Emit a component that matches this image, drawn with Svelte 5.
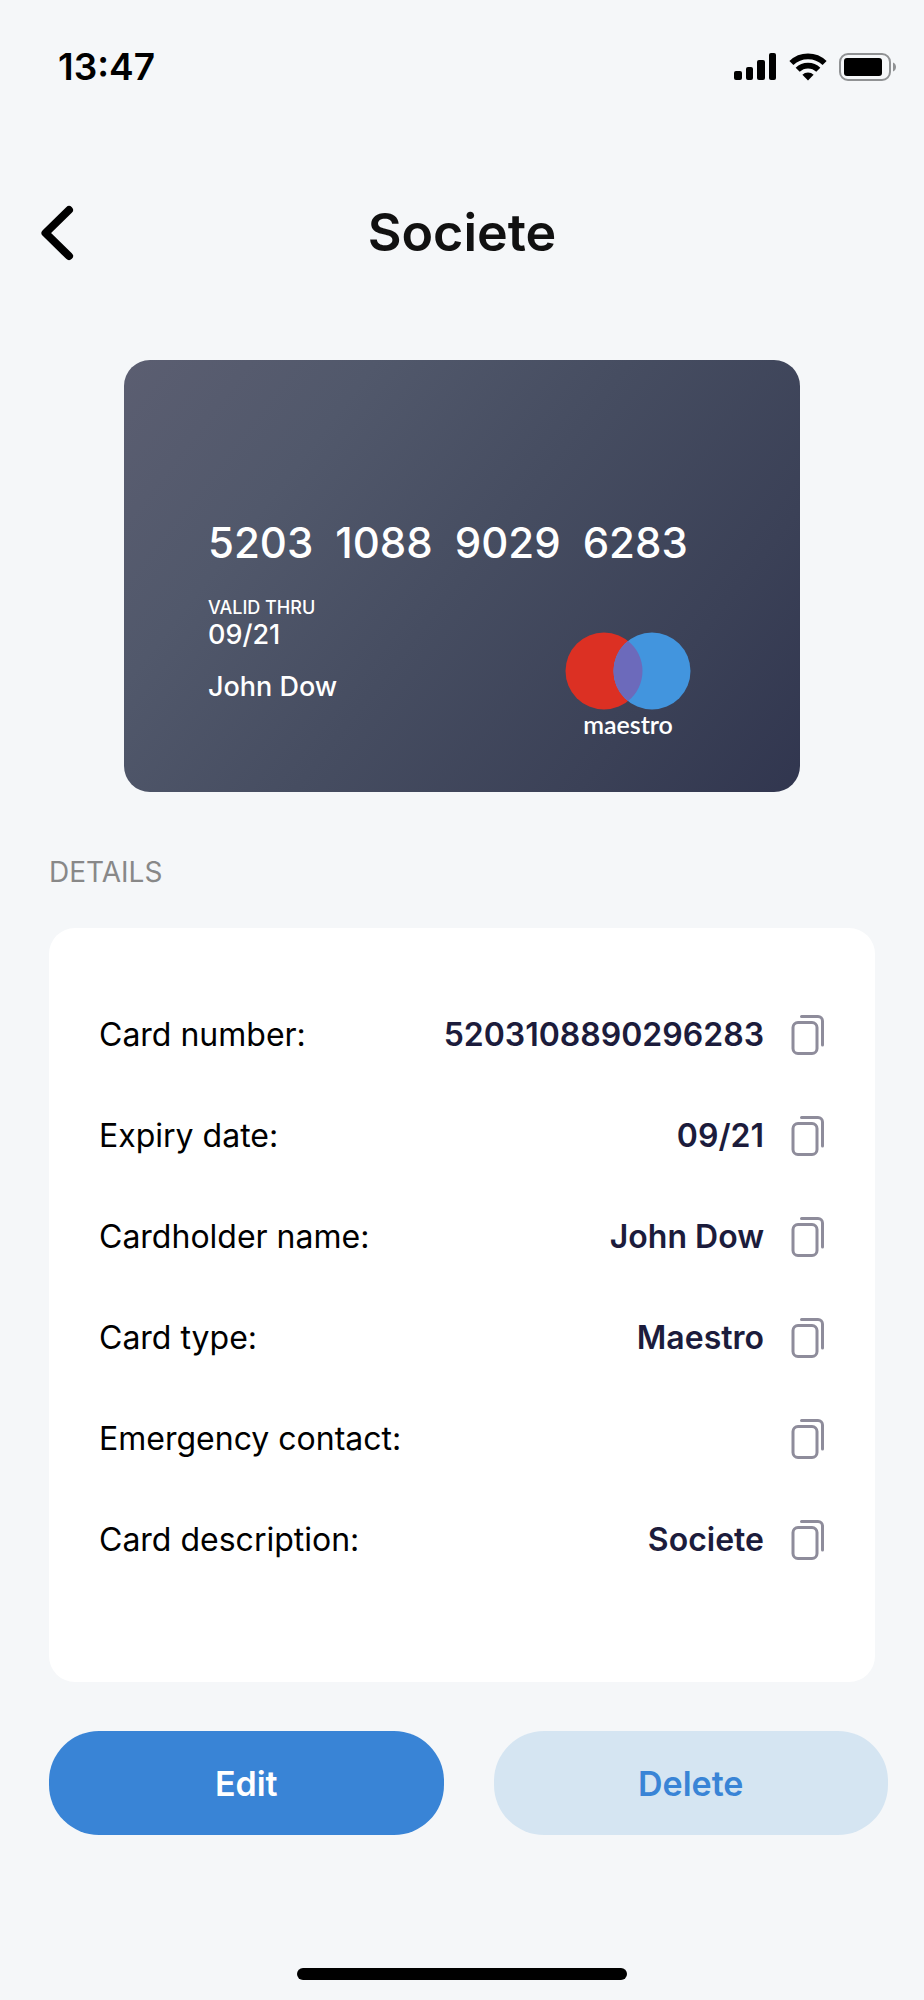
<script>
    // card data
    let card = {
        title: "Societe",
        number: "5203108890296283",
        expiry: "09/21",
        holder: "John Dow",
        type: "Maestro",
        emergency: "",
    };

    $: numberGroups = card.number.match(/.{1,4}/g);

    $: details = [
        { label: "Card number:", value: card.number },
        { label: "Expiry date:", value: card.expiry },
        { label: "Cardholder name:", value: card.holder },
        { label: "Card type:", value: card.type },
        { label: "Emergency contact:", value: card.emergency },
        { label: "Card description:", value: card.title },
    ];

    function goBack() {
        window.history.back();
    }

    function copyValue(value) {
        if (navigator.clipboard) {
            navigator.clipboard.writeText(value);
        }
    }
</script>

<div class="screen">
    <div class="status-bar">
        <span class="time">13:47</span>
        <div class="status-icons">
            <svg width="43" height="28" viewBox="0 0 43 28">
                <rect x="0" y="18" width="8" height="9" rx="2" />
                <rect x="12" y="14" width="7" height="13" rx="2" />
                <rect x="23" y="7" width="8" height="20" rx="2" />
                <rect x="35" y="0" width="7" height="27" rx="2" />
            </svg>
            <svg width="38" height="28" viewBox="0 0 38 28">
                <g fill="none" stroke="#000" stroke-width="5.8">
                    <path d="M2.4 10a24 24 0 0 1 33.2 0" />
                    <path d="M8.7 16.800a14.6 14.6 0 0 1 20.6 0" />
                </g>
                <path d="M19 27.4l-5.600-5.600a8 8 0 0 1 11.200 0z" />
            </svg>
            <svg width="58" height="28" viewBox="0 0 58 28">
                <rect
                    x="1"
                    y="1"
                    width="50"
                    height="26"
                    rx="8"
                    fill="none"
                    stroke="#909294"
                    stroke-width="2"
                />
                <rect x="5" y="5" width="38" height="18" rx="3" />
                <path d="M54 9.5c4 1.6 4 7.4 0 9z" fill="#909294" />
            </svg>
        </div>
    </div>

    <header class="header">
        <button class="back-btn" aria-label="Back" on:click={goBack}>
            <svg width="34" height="56" viewBox="0 0 34 56">
                <path
                    d="M29 5L5.5 28L29 51"
                    fill="none"
                    stroke="#000"
                    stroke-width="8"
                    stroke-linecap="round"
                    stroke-linejoin="round"
                />
            </svg>
        </button>
        <h1>{card.title}</h1>
    </header>

    <!-- Card preview -->
    <section class="bank-card">
        <div class="card-number">
            {#each numberGroups as group}
                <span>{group}</span>
            {/each}
        </div>
        <div class="card-bottom">
            <div class="card-info">
                <span class="valid">VALID THRU</span>
                <span>{card.expiry}</span>
                <span class="holder">{card.holder}</span>
            </div>
            <div class="brand">
                <svg width="126" height="78" viewBox="0 0 126 78">
                    <circle cx="39" cy="39" r="38.5" fill="#dc3023" />
                    <circle cx="87" cy="39" r="38.5" fill="#4295de" />
                    <path
                        d="M63 8.9a38.5 38.5 0 0 1 0 60.2a38.5 38.5 0 0 1 0-60.2z"
                        fill="#6c6abb"
                    />
                </svg>
                <span>maestro</span>
            </div>
        </div>
    </section>

    <h2>DETAILS</h2>

    <dl class="details">
        {#each details as item}
            <div class="row">
                <dt>{item.label}</dt>
                <dd>
                    <span>{item.value}</span>
                    <button
                        class="copy-btn"
                        aria-label="Copy {item.label}"
                        on:click={() => copyValue(item.value)}
                    >
                        <svg width="34" height="42" viewBox="0 0 34 42">
                            <g
                                fill="none"
                                stroke="#8e8c9b"
                                stroke-width="3"
                                stroke-linecap="round"
                            >
                                <rect x="2" y="8.5" width="24" height="31" rx="5" />
                                <path d="M10.5 2.5H27a4.5 4.5 0 0 1 4.5 4.5V31" />
                            </g>
                        </svg>
                    </button>
                </dd>
            </div>
        {/each}
    </dl>

    <div class="actions">
        <button class="edit-btn">Edit</button>
        <button class="delete-btn">Delete</button>
    </div>

    <div class="home-indicator"></div>
</div>

<style>
    :global(body) {
        background: #f5f7f9;
    }

    .screen {
        display: flex;
        flex-direction: column;
        min-height: 100vh;
        box-sizing: border-box;
        padding-bottom: 20px;
        font-family: Inter, "Liberation Sans", sans-serif;
        color: #000;
    }

    button {
        border: none;
        padding: 0;
        background: none;
        font-family: inherit;
        cursor: pointer;
    }

    svg {
        display: block;
    }

    .status-bar {
        display: flex;
        align-items: center;
        justify-content: space-between;
        padding: 45px 27px 45px 58px;
    }

    .time {
        font-size: 37px;
        line-height: 44px;
        font-weight: 600;
    }

    .status-icons {
        display: flex;
        align-items: center;
        gap: 12px;
    }

    .header {
        display: grid;
        grid-template-columns: 1fr auto 1fr;
        align-items: center;
        padding: 69px 40px 0;
    }

    h1 {
        margin: 0;
        font-size: 52px;
        line-height: 60px;
        font-weight: 600;
        color: #111;
    }

    .back-btn {
        justify-self: start;
    }

    .bank-card {
        align-self: center;
        box-sizing: border-box;
        width: calc(100% - 248px);
        margin-top: 97px;
        padding: 158px 109px 54px 84px;
        border-radius: 26px;
        background: linear-gradient(
            128deg,
            #5b5e71 0%,
            #51586b 25%,
            #464d61 50%,
            #3b4157 78%,
            #31364f 100%
        );
        color: #fff;
    }

    .card-number {
        display: flex;
        gap: 22px;
        font-size: 42px;
        line-height: 50px;
        font-weight: 500;
    }

    .card-bottom {
        display: flex;
        justify-content: space-between;
        margin-top: 28px;
    }

    .card-info {
        display: flex;
        flex-direction: column;
        font-size: 27px;
        line-height: 30px;
        font-weight: 500;
    }

    .valid {
        font-size: 18px;
        line-height: 24px;
    }

    .holder {
        margin-top: 22px;
    }

    .brand {
        display: flex;
        flex-direction: column;
        align-items: center;
        margin-top: 36px;
        font-family: Lato, sans-serif;
        font-size: 25px;
        line-height: 28px;
        font-weight: 600;
    }

    h2 {
        margin: 62px 49px 38px;
        font-size: 28px;
        line-height: 36px;
        font-weight: 400;
        color: #888;
    }

    .details {
        margin: 0 49px;
        padding: 56px 50px 92px;
        border-radius: 26px;
        background: #fff;
        font-size: 32px;
        line-height: 40px;
    }

    .row {
        display: flex;
        align-items: center;
        justify-content: space-between;
        height: 101px;
    }

    dd {
        display: flex;
        align-items: center;
        gap: 27px;
        margin: 0;
        font-weight: 600;
        color: #1c1c3c;
    }

    .actions {
        display: grid;
        grid-template-columns: 1fr 1fr;
        gap: 50px;
        margin: 49px 36px 0 49px;
    }

    .edit-btn,
    .delete-btn {
        height: 104px;
        border-radius: 50px;
        font-size: 34px;
        font-weight: 600;
    }

    .edit-btn {
        background: #3984d6;
        color: #fff;
    }

    .delete-btn {
        background: #d5e5f2;
        color: #3984d6;
    }

    .home-indicator {
        align-self: center;
        width: 330px;
        height: 12px;
        margin-top: auto;
        border-radius: 6px;
        background: #000;
    }
</style>
